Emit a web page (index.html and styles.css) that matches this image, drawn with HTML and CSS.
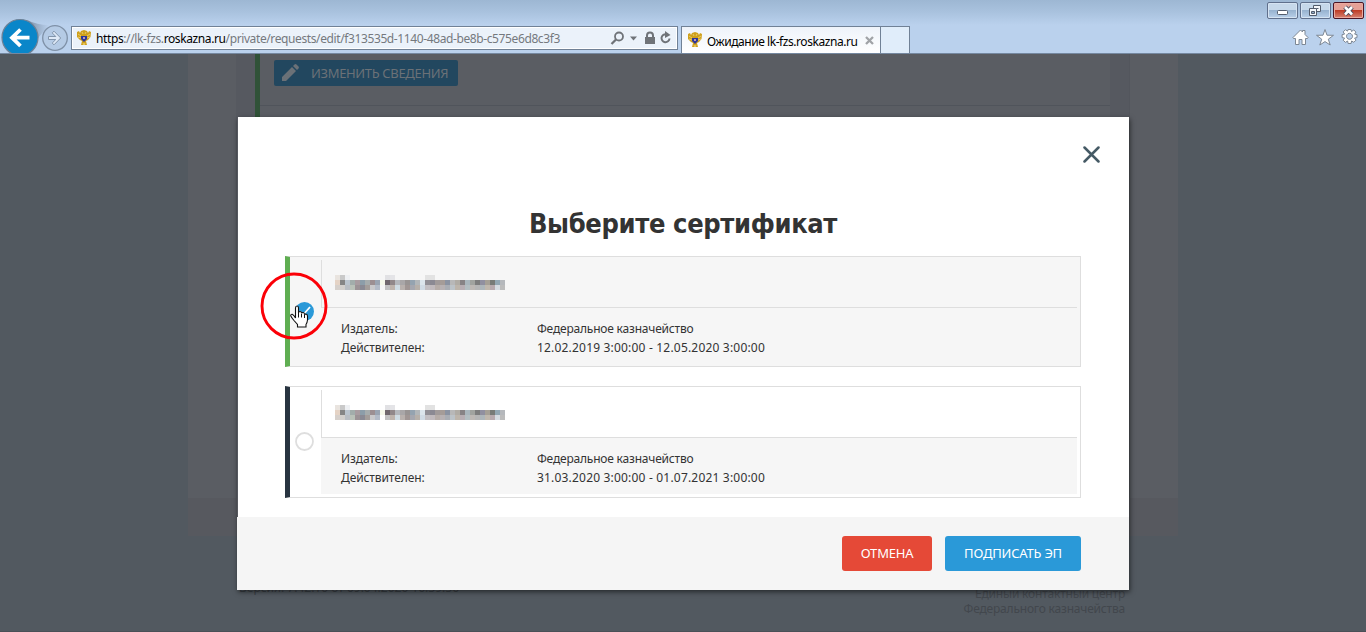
FILE: index.html
```
<!DOCTYPE html>
<html lang="ru">
<head>
<meta charset="utf-8">
<title>Выберите сертификат</title>
<link rel="stylesheet" href="styles.css">
</head>
<body>
<svg class="defs" width="0" height="0">
  <symbol id="eagle" viewBox="0 0 16 16">
    <path d="M1 2 3 1 4 3 5 1 8 0l3 1 1 2 1-2 2 1-.5 5-2.500 3L10 11l1 4H5l1-4-2-1-3-3z" fill="#cfa01c"/>
    <path d="M2 4l3 2M2 7l3 1M14 4l-3 2M14 7l-3 1M6 2l1 2M10 2L9 4M7 13l1 2 1-2" stroke="#f3dc85" stroke-width=".7" fill="none"/>
    <path d="M5 6h6v3L8 12 5 9z" fill="#2d369a"/>
    <path d="M7 7h2v2H7z" fill="#b99bb1"/>
  </symbol>
</svg>
<header class="chrome">
  <svg class="nav" width="71" height="53" viewBox="0 0 71 53">
    <defs><linearGradient id="sw"><stop offset="0" stop-color="#7c8fa6"/><stop offset="1" stop-color="#bad1ed"/></linearGradient></defs>
    <path d="M27 20q10 5 22 5L38 38z" fill="url(#sw)"/>
    <circle cx="20" cy="37.500" r="18" fill="#0a86c9" stroke="#6e8196" stroke-width="1.200"/>
    <path d="M29.500 37.700H12M20.500 29.500l-8.500 8.200 8.500 8.300" fill="none" stroke="#fff" stroke-width="3.800"/>
    <circle cx="55" cy="38" r="12.300" fill="#b5cbe5" stroke="#7f91a7" stroke-width="1.300"/>
    <path d="M48.500 36.500h7.300l-3.600-3.600 1.800-1.700 6.700 6.800-6.700 6.800-1.800-1.700 3.600-3.600h-7.300z" fill="#dfeaf7" stroke="#8295ab"/>
  </svg>
  <div class="address">
    <svg class="favicon" width="16" height="16"><use href="#eagle"/></svg>
    <span class="url"><b>https</b>://lk-fzs.<b>roskazna.ru</b>/private/requests/edit/f313535d-1140-48ad-be8b-c575e6d8c3f3</span>
    <svg class="tools" width="64" height="22" viewBox="0 0 64 22" fill="none" stroke="#6f7378">
      <circle cx="11" cy="9.500" r="4" stroke-width="1.800"/><path d="M8 12.500L3.500 17" stroke-width="2.300"/>
      <path d="M22 9.500h7l-3.500 4z" fill="#6f7378" stroke="none"/>
      <path d="M37 10h10v7H37z" fill="#6f7378" stroke="none"/><path d="M39 10V8.500a3 3 0 0 1 6 0V10" stroke-width="2"/>
      <path d="M61.500 11.500a4 4 0 1 1-3-4.200" stroke-width="2"/><path d="M57 4l5.500 4-5.500 3z" fill="#6f7378" stroke="none"/>
    </svg>
  </div>
  <div class="tab">
    <svg class="favicon" width="16" height="16"><use href="#eagle"/></svg>
    <span class="tab-title">Ожидание lk-fzs.roskazna.ru</span>
    <svg class="tab-close" width="9" height="9" viewBox="0 0 9 9"><path d="M1 1l7 7M8 1L1 8" stroke="#a0a3a7" stroke-width="2.300"/></svg>
  </div>
  <div class="newtab"></div>
  <div class="window">
    <div class="winbtns">
      <span class="winbtn"><svg width="29" height="15" viewBox="0 0 29 15"><rect x="9.500" y="7.500" width="10" height="4" rx="1" fill="#fff" stroke="#535c6c"/></svg></span>
      <span class="winbtn"><svg width="29" height="15" viewBox="0 0 29 15" fill="#f4f7fb" stroke="#535c6c"><path d="M12.500 2.500h7v6h-7z"/><path d="M8.500 5.500h7v7h-7z"/><path d="M10.500 8.500h3v2h-3z" fill="#8fa9c6"/><path d="M15.500 5.500h2"/></svg></span>
      <span class="winbtn winbtn-close"><svg width="29" height="15" viewBox="0 0 29 15"><path d="M11 4l7 7.500M18 4l-7 7.500" stroke="#4a4b5c" stroke-width="4.600"/><path d="M11 4l7 7.500M18 4l-7 7.500" stroke="#fff" stroke-width="2.600"/></svg></span>
    </div>
    <svg class="commands" width="68" height="20" viewBox="0 0 68 20" fill="#fff" stroke="#7d8793" stroke-width="1">
      <path d="M3.500 17.500v-6h-2l-.500-1 7.500-7.500 2 2V3.500h2.500v4L16 10.500l-.500 1h-2v6H10v-5H7v5z"/>
      <path d="M33 2.500l2 5.700 6.500.1-5.200 3.900 1.900 5.800-5.200-3.400-5.200 3.400 1.900-5.800-5.200-3.900 6.500-.1z"/>
      <path fill-rule="evenodd" d="M56 2.500h3l.5 2 2.300-1.600 2.100 2.200-1.300 2 2.400.5v3l-2.400.5 1.400 2-2.200 2.200-2.200-1.300-.5 2.500h-3l-.5-2.500-2.200 1.400-2.200-2.200 1.400-2.100-2.500-.5v-3l2.500-.5-1.400-2.200 2.200-2.200 2.200 1.400zM57.500 6.300a3 3 0 1 0 .01 0z"/>
    </svg>
  </div>
</header>
<main class="page">
  <div class="wrapper">
    <div class="content">
      <div class="panel">
        <div class="panel-row">
          <div class="edit"><svg width="18" height="18" viewBox="0 0 18 18" fill="#6b7177"><path d="M1 17v-4L11 3l4 4L5 17zM12 2l1.500-1.500q1-.8 2 0l2 2q.8 1 0 2L16 6z"/></svg><span class="edit-text">ИЗМЕНИТЬ СВЕДЕНИЯ</span></div>
        </div>
      </div>
    </div>
  </div>
  <div class="site-footer">
    <span class="version">Версия: 7.42.10 от 09.04.2020 16:39:56</span>
    <span class="contact"><span class="contact-a">Единый контактный центр</span><span class="contact-b">Федерального казначейства</span></span>
  </div>
</main>
<section class="modal">
  <div class="modal-body">
    <svg class="modal-close" width="17" height="17" viewBox="0 0 17 17"><path d="M1.500 1.500l14 14M15.500 1.500l-14 14" stroke="#455a65" stroke-width="2.500" stroke-linecap="round"/></svg>
    <h1 class="title"><span class="title-text">Выберите сертификат</span></h1>
    <article class="card card-selected">
      <div class="card-pick"><svg class="radio" width="19" height="19" viewBox="0 0 19 19"><circle cx="9.500" cy="9.500" r="9.500" fill="#2a99d8"/><path d="M5 9.500l3 3.500 7-8" fill="none" stroke="#fff" stroke-width="1.800"/></svg></div>
      <div class="card-main">
        <div class="card-name"><svg class="mosaic" width="170" height="15"></svg></div>
        <dl class="card-info"><dt class="label">Издатель:</dt><dd class="issuer">Федеральное казначейство</dd><dt class="label">Действителен:</dt><dd class="dates">12.02.2019 3:00:00 - 12.05.2020 3:00:00</dd></dl>
      </div>
    </article>
    <article class="card">
      <div class="card-pick"><svg class="radio" width="19" height="19" viewBox="0 0 19 19"><circle cx="9.500" cy="9.500" r="8.500" fill="#fff" stroke="#dedede" stroke-width="1.800"/></svg></div>
      <div class="card-main">
        <div class="card-name"><svg class="mosaic" width="170" height="15"></svg></div>
        <dl class="card-info"><dt class="label">Издатель:</dt><dd class="issuer">Федеральное казначейство</dd><dt class="label">Действителен:</dt><dd class="dates">31.03.2020 3:00:00 - 01.07.2021 3:00:00</dd></dl>
      </div>
    </article>
  </div>
  <footer class="modal-footer">
    <button class="btn btn-red">ОТМЕНА</button>
    <button class="btn btn-blue">ПОДПИСАТЬ ЭП</button>
  </footer>
</section>
<svg class="pointer" width="70" height="70" viewBox="0 0 70 70">
  <circle cx="34" cy="36" r="32" fill="none" stroke="#fb0007" stroke-width="2.900"/>
  <g transform="translate(30 35)"><path d="M5.500 13V3q0-2 1.500-2t1.500 2v5q0-1.500 1.500-1.500T11.500 8v.5Q11.700 7.500 13 7.500T14.500 9v.8q.3-.8 1.300-.8 1.700.2 1.700 2v4q-.3 3-1.500 4.500V22H7.500v-2.500L4 15.500q-2.500-3-3.300-4.800 0-1.600 1.500-1.400Q4 10 5.500 13z" fill="#fff" stroke="#111" stroke-width="1.100"/><path d="M8.500 8v4.500M11.500 9v3.500M14.500 10v3" stroke="#111"/></g>
</svg>
<script src="script.js"></script>
</body>
</html>
```
FILE: styles.css
```
* { box-sizing: border-box; }
body { margin: 0; width: 1366px; height: 632px; overflow: hidden; position: relative; background: #525960; font: 12px "Noto Sans", sans-serif; color: #333; }
.defs { position: absolute; }
.chrome { height: 54px; display: flex; background: linear-gradient(#9db7d3 0, #a9c2de 12px, #bad1ed 25px); border-bottom: 1px solid #7588a0; }
.nav { flex: none; }
.address { margin-top: 26px; width: 607px; height: 24px; display: flex; align-items: center; border: 1px solid #708196; background: #ebf2fa; padding-left: 4px; box-shadow: inset 0 0 0 1px #fff; }
.favicon { flex: none; }
.url { margin-left: 4px; width: 512px; white-space: nowrap; color: #75797e; line-height: 20px; letter-spacing: -0.39px; padding-top: 2px; }
.url b { font-weight: 400; color: #000; }
.tools { flex: none; }
.tab { margin: 26px 0 0 3px; width: 200px; height: 27px; border: 1px solid #708196; border-bottom: 0; background: linear-gradient(#eef3fa, #fff); display: flex; align-items: center; padding-left: 5px; }
.tab-title { margin-left: 4px; width: 153px; white-space: nowrap; color: #000; padding-top: 2px; letter-spacing: -0.44px; }
.tab-close { margin-left: 5px; }
.newtab { margin-top: 26px; width: 29px; height: 27px; background: #e0edfa; border: 1px solid #708196; border-width: 1px 1px 0 0; }
.window { margin-left: auto; width: 99px; padding-top: 2px; display: flex; flex-direction: column; }
.winbtns { display: flex; gap: 2px; }
.winbtn { width: 31px; height: 17px; border: 1px solid #60708c; border-radius: 2px; background: linear-gradient(#c6d8ea 45%, #98b3d0 50%, #b9d0e9); box-shadow: inset 0 0 0 1px #d5e3f2; }
.winbtn svg { display: block; }
.winbtn-close { border-color: #4b1525; background: linear-gradient(#e5a197 45%, #bf3d27 50%, #d68272); box-shadow: inset 0 0 0 1px #e9aaa0; }
.commands { margin: 8px 0 0 25px; }
.page { height: 578px; border-bottom: 1px solid #4a5057; }
.wrapper { width: 990px; height: 482px; margin-left: 188px; padding-left: 48px; background: linear-gradient(#5a5d63 444px, #57595f 444px); }
.content { width: 894px; height: 444px; border-right: 1px solid #53565d; background: #565960; padding-left: 19px; }
.panel { width: 855px; height: 444px; background: #5a5d63; border-left: 5px solid #305238; }
.panel-row { height: 52px; padding: 6px 0 0 14px; border-bottom: 1px solid #50545b; }
.edit { width: 184px; height: 26px; border-radius: 2px; background: #22475f; display: flex; align-items: center; padding-left: 7px; color: #6b7177; }
.edit-text { margin-left: 12px; font-size: 13px; letter-spacing: -0.33px; white-space: nowrap; }
.site-footer { margin: 44px 241px 0 239px; display: flex; justify-content: space-between; color: #3b4046; }
.version { line-height: 16px; white-space: nowrap; }
.contact { padding-top: 6px; display: flex; flex-direction: column; align-items: flex-end; line-height: 15px; white-space: nowrap; color: #42474d; letter-spacing: -0.2px; }
.modal { position: absolute; left: 237px; top: 117px; width: 892px; height: 473px; box-shadow: 1px 2px 5px rgba(0,0,0,.55); }
.modal-body { margin-left: 1px; height: 400px; padding: 29px 48px 0 47px; background: #fff; display: flex; flex-direction: column; }
.modal-close { align-self: flex-end; margin-right: -19px; }
.title { margin: 43px 0 0; height: 50px; text-align: center; white-space: nowrap; font: 700 27px/36px "DejaVu Sans Condensed", "DejaVu Sans", sans-serif; font-stretch: condensed; letter-spacing: -0.35px; }
.card { flex: none; height: 112px; display: flex; border: 1px solid #dedede; border-left: 5px solid #283440; padding: 3px 3px 3px 0; }
.card-selected { height: 111px; margin-bottom: 19px; background: #f6f6f6; border-left-color: #5fae52; }
.card-pick { width: 31px; padding: 42px 0 0 5px; }
.card-main { flex: 1; }
.card-name { height: 48px; border-left: 1px solid #dedede; border-bottom: 1px solid #dedede; padding: 15px 0 0 13px; }
.mosaic { display: block; }
.card-info { margin: 0; height: 56px; padding: 11px 0 0 20px; background: #f6f6f6; display: grid; grid-template-columns: 196px 1fr; grid-template-rows: 19px 19px; line-height: 19px; white-space: nowrap; }
.card-info dd { margin: 0; }
.label { letter-spacing: -0.1px; }
.issuer { letter-spacing: -0.2px; }
.dates { letter-spacing: 0.19px; }
.modal-footer { height: 73px; background: #f5f5f5; padding: 19px 48px 0 0; display: flex; justify-content: flex-end; gap: 13px; }
.btn { height: 35px; border: 0; border-radius: 3px; padding: 0 0 2px; color: #fff; font: 13px "Noto Sans", sans-serif; letter-spacing: -0.2px; white-space: nowrap; }
.btn-red { width: 90px; background: #e54937; }
.btn-blue { width: 136px; background: #2a99d8; }
.pointer { position: absolute; left: 260px; top: 270px; }
```
FILE: script.js
```
const rows = [
  "e9e4df c9c9c9 eef0f3 - - - - - - - e1e1e4 e4e4e7 - - - - - - e2e2e2 e2e2e2 - - - - - - - - - - - - - -",
  "e5d3c5 858585 bac4ce a2adab a89ca0 8c9da9 a5abac 9c8f92 9aa4b2 f5f8ea 70676d 918889 b5b8bc a9a7a8 989493 94a3b0 b1b6b9 dbe5ec 918f96 8b8993 a19a9a a59c98 8b93a2 b8b8b8 b0aca5 878385 a9b6bd a1a39f 7d7d7d 9090a0 a5a096 777b77 92a7b3 b5b8bc",
  "d6d0cb d2cfcc b9bec4 b9c1b8 9c9396 8a8a94 a39d9a c9c9cb b3bbc8 - c0c0c0 beb4ac cfdce3 b8b1ad a09694 a5a7af b6b0aa d0dbe5 c2bfc3 c0b9bd b6aca8 b7b1b3 a9adb4 bcc3c8 bdb5ab b7aeb3 b3bec2 bdb8b4 b5b5b5 adb6ba c0b8ad b7aaae d5dce2 bcbcbc"
];
document.querySelectorAll(".mosaic").forEach(svg => {
  rows.forEach((row, y) => row.split(" ").forEach((color, x) => {
    if (color === "-") return;
    const cell = document.createElementNS("http://www.w3.org/2000/svg", "rect");
    cell.setAttribute("x", x * 5);
    cell.setAttribute("y", y * 5);
    cell.setAttribute("width", 5);
    cell.setAttribute("height", 5);
    cell.setAttribute("fill", "#" + color);
    svg.append(cell);
  }));
});
```
